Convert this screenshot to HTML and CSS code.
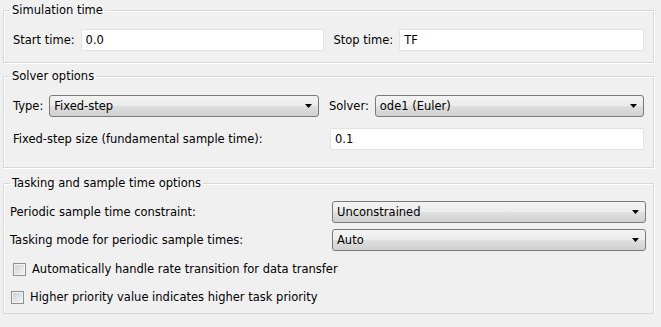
FILE: index.html
```html
<!DOCTYPE html>
<html lang="en">
<head>
  <meta charset="UTF-8">
  <title>Solver</title>
  <link rel="stylesheet" href="styles.css">
</head>
<body>
  <div id="page">
    <fieldset class="group" id="sim">
      <legend>Simulation time</legend>
      <div class="row halves">
        <div class="field"><span>Start time:</span><div class="edit">0.0</div></div>
        <div class="field"><span>Stop time:</span><div class="edit">TF</div></div>
      </div>
    </fieldset>

    <fieldset class="group" id="solver">
      <legend>Solver options</legend>
      <div class="row solver-row">
        <div class="field"><span>Type:</span>
          <div class="combo"><span>Fixed-step</span><svg width="7" height="4" viewBox="0 0 7 4"><path d="M0 0h7L3.5 4z"/></svg></div>
        </div>
        <div class="field"><span>Solver:</span>
          <div class="combo"><span>ode1 (Euler)</span><svg width="7" height="4" viewBox="0 0 7 4"><path d="M0 0h7L3.5 4z"/></svg></div>
        </div>
      </div>
      <div class="row pair step-row">
        <span>Fixed-step size (fundamental sample time):</span>
        <div class="edit">0.1</div>
      </div>
    </fieldset>

    <fieldset class="group" id="tasking">
      <legend>Tasking and sample time options</legend>
      <div class="row pair">
        <span>Periodic sample time constraint:</span>
        <div class="combo"><span>Unconstrained</span><svg width="7" height="4" viewBox="0 0 7 4"><path d="M0 0h7L3.5 4z"/></svg></div>
      </div>
      <div class="row pair mode-row">
        <span>Tasking mode for periodic sample times:</span>
        <div class="combo"><span>Auto</span><svg width="7" height="4" viewBox="0 0 7 4"><path d="M0 0h7L3.5 4z"/></svg></div>
      </div>
      <label class="check first"><span class="box"></span>Automatically handle rate transition for data transfer</label>
      <label class="check second"><span class="box"></span>Higher priority value indicates higher task priority</label>
    </fieldset>
  </div>
</body>
</html>
```

FILE: styles.css
```css
body {
  margin: 0;
  background: #f0f0f0;
  font-family: "DejaVu Sans", sans-serif;
  font-size: 11.5px;
  color: #000;
}

#page {
  width: 651px;
  padding: 4px 0 0 3px;
}

.group {
  margin: 0;
  padding: 0 9px;
  border: 1px solid #d8d8d8;
  box-shadow: inset 1px 1px 0 #fff, 1px 1px 0 #fff;
  min-width: 0;
}

.group legend {
  margin-left: -3px;
  padding: 0 2px;
  line-height: 13px;
}

#sim { padding-bottom: 11px; }
#solver { margin-top: 7px; padding-bottom: 17px; }
#tasking { margin-top: 9px; padding: 0 7px 9px 6px; }
#tasking legend { margin-left: 0; }

.row {
  display: grid;
  align-items: center;
}

.halves {
  margin-top: 12px;
  grid-template-columns: 1fr 1fr;
  column-gap: 10px;
}

.solver-row {
  margin-top: 12px;
  grid-template-columns: 306px 1fr;
  column-gap: 10px;
}

.step-row {
  margin-top: 11px;
  grid-template-columns: 1fr 312px;
}

.field {
  display: flex;
  align-items: center;
}

.field > span {
  margin-right: 6px;
  white-space: nowrap;
}

.field .edit,
.field .combo {
  flex: 1;
}

.pair {
  grid-template-columns: 1fr 314px;
  margin-top: 11px;
}

.mode-row { margin-top: 6px; }

.edit {
  height: 20px;
  line-height: 20px;
  padding: 0 4px;
  background: #fff;
  border: 1px solid #e2e2e2;
  border-radius: 2px;
}

.combo {
  height: 20px;
  display: flex;
  align-items: center;
  justify-content: space-between;
  padding: 0 6px 0 4px;
  border: 1px solid #7a7a7a;
  border-radius: 3px;
  background: linear-gradient(#f3f3f3, #ebebeb 50%, #dfdfdf 50%, #d0d0d0);
}

.combo svg {
  fill: #000;
}

.check {
  display: flex;
  align-items: center;
  height: 14px;
}

.check.first { margin: 11px 0 0 3px; }
.check.second { margin: 14px 0 0 1px; }

.box {
  width: 11px;
  height: 11px;
  margin-right: 6px;
  border: 1px solid #8e8f8f;
  box-shadow: inset 0 0 0 1px #f4f4f4;
  background: linear-gradient(135deg, #cdcdcd, #f7f7f7);
}
```
